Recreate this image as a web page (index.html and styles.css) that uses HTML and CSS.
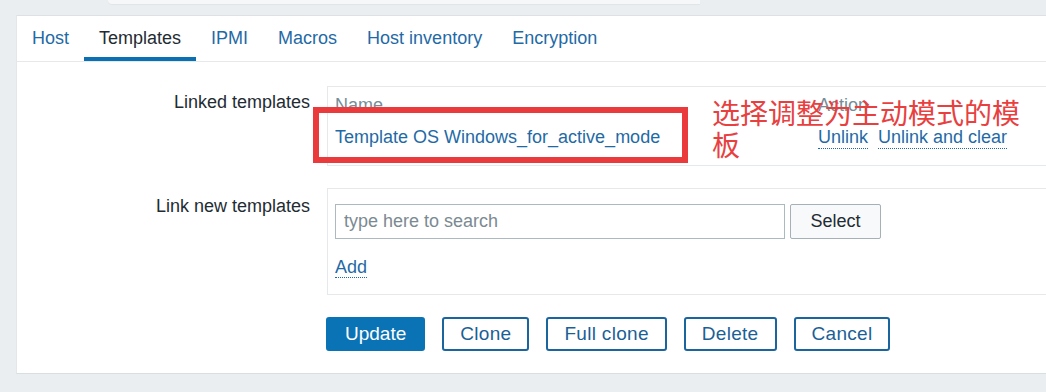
FILE: index.html
```html
<!DOCTYPE html>
<html>
<head>
<meta charset="utf-8">
<link rel="stylesheet" href="styles.css">
</head>
<body>
<div class="topbar"></div>
<div class="panel">
  <nav class="tabs">
    <a class="tab">Host</a>
    <a class="tab active">Templates</a>
    <a class="tab">IPMI</a>
    <a class="tab">Macros</a>
    <a class="tab">Host inventory</a>
    <a class="tab">Encryption</a>
  </nav>
  <div class="form">
    <div class="row">
      <label class="label label-1">Linked templates</label>
      <div class="box box-linked">
        <div class="trow thead">
          <div class="c-name">Name</div>
          <div class="c-action">Action</div>
        </div>
        <div class="trow tdata">
          <div class="c-name"><a class="link">Template OS Windows_for_active_mode</a></div>
          <div class="c-action"><a class="link dotted">Unlink</a><a class="link dotted">Unlink and clear</a></div>
        </div>
      </div>
    </div>
    <div class="row">
      <label class="label label-2">Link new templates</label>
      <div class="box box-new">
        <div class="search">
          <input class="input" type="text" placeholder="type here to search">
          <button class="btn-grey">Select</button>
        </div>
        <div class="add"><a class="link dotted">Add</a></div>
      </div>
    </div>
    <div class="row row-buttons">
      <div class="label"></div>
      <div class="buttons">
        <button class="btn primary">Update</button>
        <button class="btn">Clone</button>
        <button class="btn">Full clone</button>
        <button class="btn">Delete</button>
        <button class="btn">Cancel</button>
      </div>
    </div>
  </div>
</div>
<div class="mark-box"></div>
<div class="mark-text">选择调整为主动模式的模板</div>
</body>
</html>
```
FILE: styles.css
```css
html, body {
  margin: 0;
  padding: 0;
  overflow: hidden;
}
body {
  position: relative;
  background: #ebeef0;
  font-family: "Liberation Sans", Arial, sans-serif;
  font-size: 18px;
  color: #1f2c33;
  height: 392px;
}
.topbar {
  margin-left: 108px;
  width: 592px;
  height: 4px;
  background: #f5f7f8;
  border-radius: 0 0 0 6px;
  box-shadow: 0 1px 1px rgba(0,0,0,0.04);
}
.panel {
  margin: 11px 0 0 16px;
  width: 1080px;
  background: #fff;
  border-top: 1px solid #dde1e4;
  border-left: 1px solid #e4e7ea;
  border-bottom: 1px solid #d9dee1;
}
.tabs {
  display: flex;
  border-bottom: 1px solid #e6e8ea;
}
.tab {
  padding: 3px 15px 0;
  line-height: 38px;
  border-bottom: 4px solid transparent;
  color: #1f6aa6;
}
.tab.active {
  color: #1f2c33;
  border-bottom-color: #0a6fb3;
}
.form {
  padding: 24px 0 22px;
  display: flex;
  flex-direction: column;
}
.row {
  display: flex;
  gap: 17px;
}
.row + .row {
  margin-top: 22px;
}
.label {
  width: 293px;
  flex: none;
  text-align: right;
  line-height: 22px;
}
.label-1 { padding-top: 5px; }
.label-2 { padding-top: 7px; }
.box {
  flex: 1;
  border: 1px solid #e6e9eb;
  padding: 7px 7px 16px;
}
.trow {
  display: flex;
  line-height: 22px;
}
.thead {
  color: #768d99;
}
.tdata {
  margin-top: 10px;
}
.c-name {
  width: 483px;
  flex: none;
}
.c-action {
  display: flex;
  gap: 10px;
}
.link {
  color: #1f6aa6;
}
.dotted {
  border-bottom: 1px dotted #1f6aa6;
}
.box-new {
  padding: 15px 7px 16px;
}
.search {
  display: flex;
  gap: 5px;
}
.input {
  width: 450px;
  height: 35px;
  box-sizing: border-box;
  border: 1px solid #acb9bf;
  padding: 0 8px;
  font-family: inherit;
  font-size: 18px;
  color: #1f2c33;
}
.input::placeholder {
  color: #7b8a92;
}
.btn-grey {
  width: 91px;
  height: 35px;
  border: 1px solid #a5b1b6;
  border-radius: 2px;
  background: #f7f9fa;
  font-family: inherit;
  font-size: 18px;
  color: #1f2c33;
}
.add {
  margin-top: 17px;
  line-height: 22px;
}
.buttons {
  display: flex;
  gap: 17px;
  margin-left: -1px;
}
.btn {
  height: 34px;
  padding: 0 16px;
  border: 2px solid #1b659f;
  border-radius: 3px;
  background: #fff;
  font-family: inherit;
  font-size: 19px;
  letter-spacing: 0.3px;
  color: #1b5f96;
}
.btn.primary {
  background: #0a73b6;
  border-color: #0a73b6;
  color: #fff;
  letter-spacing: 0;
  padding: 0 17px;
}
.mark-box {
  position: absolute;
  left: 313px;
  top: 107px;
  width: 375px;
  height: 56px;
  box-sizing: border-box;
  border: 6px solid #ea3a3c;
}
.mark-text {
  position: absolute;
  left: 712px;
  top: 96px;
  width: 320px;
  font-family: "Noto Sans CJK SC", sans-serif;
  font-size: 28px;
  line-height: 32px;
  color: #e8403f;
}
```
